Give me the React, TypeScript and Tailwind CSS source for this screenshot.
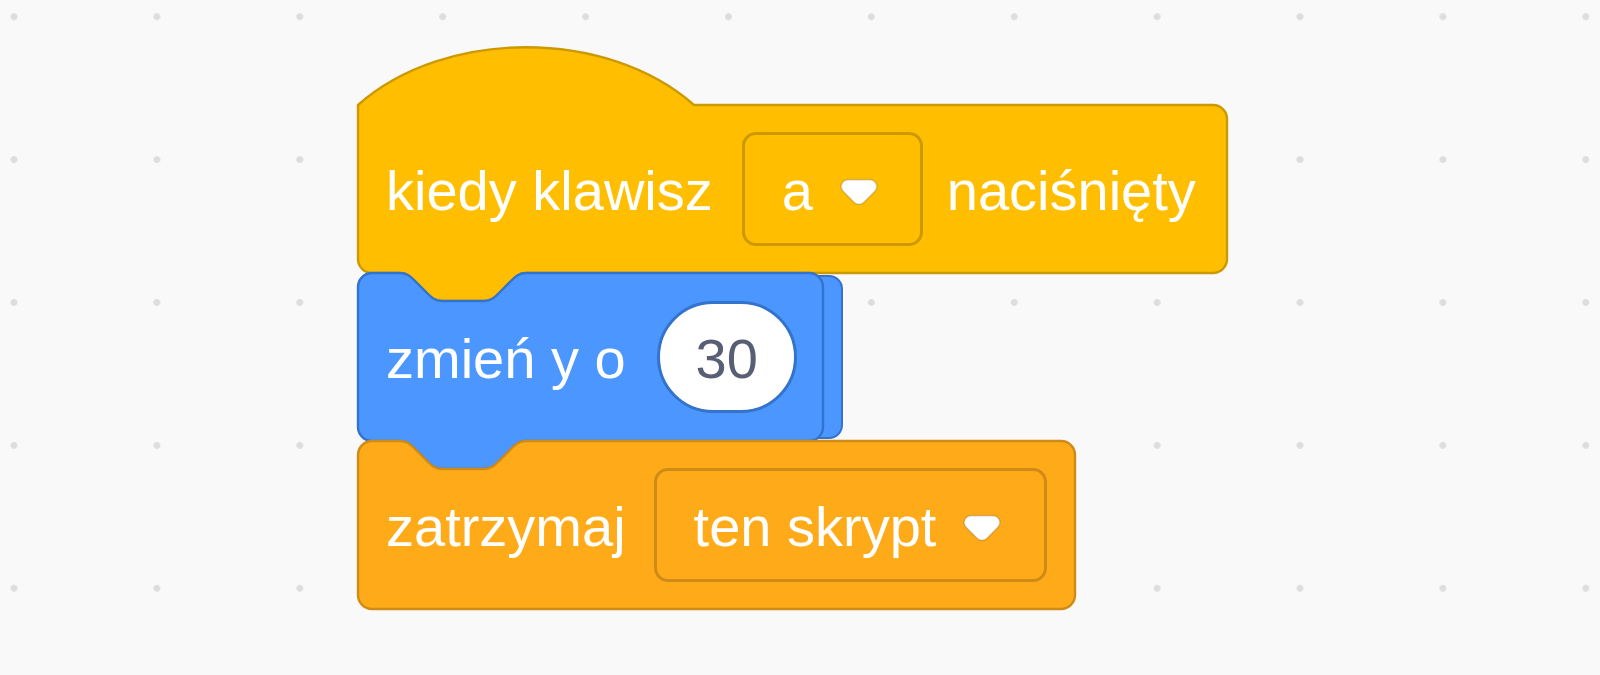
import React from 'react';

// Scratch block geometry, scaled ~3.5x
const R = 14;
const NOTCH_TOP =
  'H 42 c 7,0 10.5,3.5 14,7 l 14,14 c 3.5,3.5 7,7 14,7 h 42 c 7,0 10.5,-3.5 14,-7 l 14,-14 c 3.5,-3.5 7,-7 14,-7';
const TAB_BOTTOM =
  'H 168 c -7,0 -10.5,3.5 -14,7 l -14,14 c -3.5,3.5 -7,7 -14,7 h -42 c -7,0 -10.5,-3.5 -14,-7 l -14,-14 c -3.5,-3.5 -7,-7 -14,-7';

function blockPath(w: number, h: number, hat?: boolean, cap?: boolean) {
  const top = hat
    ? 'M 0,0 C 87.5,-77 248.5,-77 336,0'
    : `M 0,${R} A ${R},${R} 0 0,1 ${R},0 ${NOTCH_TOP}`;
  const bottom = cap ? '' : TAB_BOTTOM;
  return `${top} H ${w - R} A ${R},${R} 0 0,1 ${w},${R} V ${h - R} A ${R},${R} 0 0,1 ${w - R},${h} ${bottom} H ${R} A ${R},${R} 0 0,1 0,${h - R} Z`;
}

interface BlockProps {
  width: number;
  fill: string;
  stroke: string;
  hat?: boolean;
  cap?: boolean;
  className: string;
  children: React.ReactNode;
  behind?: React.ReactNode;
}

const Block: React.FC<BlockProps> = ({ width, fill, stroke, hat, cap, className, children, behind }) => {
  const h = 168;
  return (
    <div className={`relative h-[168px] ${className}`}>
      {behind}
      <svg className="absolute left-0 top-0 overflow-visible" width={width} height={h}>
        <path d={blockPath(width, h, hat, cap)} fill={fill} stroke={stroke} strokeWidth={2.4} strokeLinejoin="round" />
      </svg>
      <div className="relative flex h-full items-center pl-[28px]">{children}</div>
    </div>
  );
};

const Arrow: React.FC = () => (
  <svg className="mt-[6px] shrink-0" width="40" height="28" viewBox="-0.6 -0.6 13.91 9.99">
    <path
      d="M12.71,2.44A2.41,2.41,0,0,1,12,4.16L8.08,8.08a2.45,2.45,0,0,1-3.45,0L0.72,4.16A2.42,2.42,0,0,1,0,2.44A2.48,2.48,0,0,1,0.71,0.71A2.41,2.41,0,0,1,2.42,0H10.29a2.39,2.39,0,0,1,1.7,0.71A2.43,2.43,0,0,1,12.71,2.44Z"
      fill="#ffffff"
      stroke="rgba(0,0,0,0.13)"
      strokeWidth="0.7"
    />
  </svg>
);

export default function App() {
  return (
    <div className="h-[675px] w-full overflow-hidden bg-[#f9f9f9] bg-[image:radial-gradient(circle,#dddddd_3px,transparent_3.8px)] bg-size-[142.9px_142.9px] bg-[length:142.9px_142.9px] bg-position-[-57.45px_-54.75px] font-['Liberation_Sans',Arial,sans-serif] text-[56px] leading-none text-white">
      <div className="flex flex-col pl-[358px] pt-[105px]">
        {/* when key pressed */}
        <Block width={869} hat fill="#FFBF00" stroke="#CC9900" className="w-[869px]">
          <span className="whitespace-nowrap pt-[4px]">kiedy klawisz</span>
          <div className="ml-[29px] flex h-[114px] w-[181px] shrink-0 items-center rounded-[14px] border-[3px] border-[#CC9900] pl-[37px]">
            <span className="pt-[4px]">a</span>
            <div className="ml-[26px]">
              <Arrow />
            </div>
          </div>
          <span className="ml-[24px] whitespace-nowrap pt-[4px]">naciśnięty</span>
        </Block>

        {/* change y by */}
        <Block
          width={465}
          fill="#4C97FF"
          stroke="#3373CC"
          className="w-[465px]"
          behind={
            <div className="absolute right-[-20px] top-[2px] h-[164px] w-[80px] rounded-[14px] border-2 border-[#3373CC] bg-[#4C97FF]" />
          }
        >
          <span className="whitespace-nowrap pt-[4px]">zmień y o</span>
          <div className="ml-[31px] flex h-[112px] w-[140px] shrink-0 items-center justify-center rounded-full border-[3px] border-[#3373CC] bg-white text-[#575E75]">
            <span className="pt-[4px]">30</span>
          </div>
        </Block>

        {/* stop */}
        <Block width={717} cap fill="#FFAB19" stroke="#CF8B17" className="w-[717px]">
          <span className="whitespace-nowrap pt-[4px]">zatrzymaj</span>
          <div className="ml-[28px] flex h-[114px] w-[393px] shrink-0 items-center rounded-[14px] border-[3px] border-[#CF8B17] pl-[37px]">
            <span className="whitespace-nowrap pt-[4px]">ten skrypt</span>
            <div className="ml-[26px]">
              <Arrow />
            </div>
          </div>
        </Block>
      </div>
    </div>
  );
}
